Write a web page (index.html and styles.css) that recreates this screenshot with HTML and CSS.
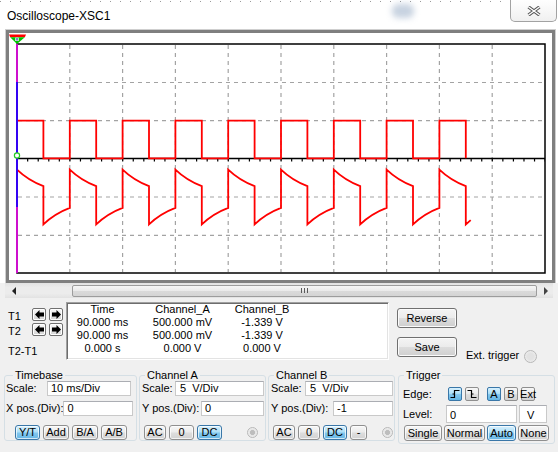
FILE: index.html
```html
<!DOCTYPE html>
<html>
<head>
<meta charset="utf-8">
<title>Oscilloscope-XSC1</title>
<link rel="stylesheet" href="styles.css">
</head>
<body>
<div class="window">
  <div class="titlebar">
    <span class="title">Oscilloscope-XSC1</span>
    <span class="glass"></span>
    <div class="close">
      <svg width="14" height="10" viewBox="0 0 14 10"><path class="xo" d="M1.5 1 L12.5 9 M12.5 1 L1.5 9"/><path class="xi" d="M1.5 1 L12.5 9 M12.5 1 L1.5 9"/></svg>
    </div>
  </div>

  <div class="frame">
    <svg class="plot" width="543" height="247" viewBox="9 33 543 247">
      <path class="grid" d="M69.8 45V272M122.6 45V272M175.4 45V272M228.2 45V272M281 45V272M333.8 45V272M386.6 45V272M439.4 45V272M492.2 45V272"/>
      <path class="grid" d="M18 82.5H544M18 120.7H544M18 197H544M18 235.3H544"/>
      <line class="axis" x1="17" y1="158.5" x2="545" y2="158.5"/>
      <line class="ticks" x1="16.5" y1="160" x2="545" y2="160"/>
      <rect class="border" x="17" y="44" width="528" height="229"/>
      <path class="trace" d="M17 120.7h26.4v37.6h26.4v-37.6h26.4v37.6h26.4v-37.6h26.4v37.6h26.4v-37.6h26.4v37.6h26.4v-37.6h26.4v37.6h26.4v-37.6h26.4v37.6h26.4v-37.6h26.4v37.6h26.4v-37.6h26.4v37.6h26.4v-37.6h26.4v37.6"/>
      <path class="trace" d="M17 169.6c8.8 8.46 17.6 13.18 26.4 16.53v38.27c8.8-8.46 17.6-13.18 26.4-16.53v-38.27c8.8 8.46 17.6 13.18 26.4 16.53v38.27c8.8-8.46 17.6-13.18 26.4-16.53v-38.27c8.8 8.46 17.6 13.18 26.4 16.53v38.27c8.8-8.46 17.6-13.18 26.4-16.53v-38.27c8.8 8.46 17.6 13.18 26.4 16.53v38.27c8.8-8.46 17.6-13.18 26.4-16.53v-38.27c8.8 8.46 17.6 13.18 26.4 16.53v38.27c8.8-8.46 17.6-13.18 26.4-16.53v-38.27c8.8 8.46 17.6 13.18 26.4 16.53v38.27c8.8-8.46 17.6-13.18 26.4-16.53v-38.27c8.8 8.46 17.6 13.18 26.4 16.53v38.27c8.8-8.46 17.6-13.18 26.4-16.53v-38.27c8.8 8.46 17.6 13.18 26.4 16.53v38.27c8.8-8.46 17.6-13.18 26.4-16.53v-38.27c8.8 8.46 17.6 13.18 26.4 16.53v38.27l4.9-4.3"/>
      <line class="cur1" x1="17" y1="44" x2="17" y2="273"/>
      <line class="cur2" x1="17" y1="82" x2="17" y2="207"/>
      <circle class="gnd" cx="17" cy="155.5" r="2.6"/>
      <polygon class="mk-red" points="9,34.5 26,34.5 24.8,37.2 10.2,37.2"/>
      <polygon class="mk-green" points="10.2,37.2 24.8,37.2 17,44"/>
      <rect class="mk-label" x="15.3" y="37.6" width="3.4" height="3.4"/>
      <line class="mk-one" x1="17" y1="38" x2="17" y2="40.6"/>
    </svg>
  </div>

  <div class="lower">
    <div class="hscroll">
      <span class="scell"><span class="tri-l"></span></span>
      <div class="strack"><div class="thumb"><span class="grip"></span></div></div>
      <span class="scell right"><span class="tri-r"></span></span>
    </div>

    <div class="cursors">
      <div class="tcol">
        <div class="trow">
          <span class="tlab">T1</span>
          <button class="arr"><svg width="9" height="9" viewBox="0 0 9 9"><polygon points="0,4.5 4.5,0 4.5,2.6 9,2.6 9,6.4 4.5,6.4 4.5,9"/></svg></button>
          <button class="arr"><svg width="9" height="9" viewBox="0 0 9 9"><polygon points="9,4.5 4.5,0 4.5,2.6 0,2.6 0,6.4 4.5,6.4 4.5,9"/></svg></button>
        </div>
        <div class="trow">
          <span class="tlab">T2</span>
          <button class="arr"><svg width="9" height="9" viewBox="0 0 9 9"><polygon points="0,4.5 4.5,0 4.5,2.6 9,2.6 9,6.4 4.5,6.4 4.5,9"/></svg></button>
          <button class="arr"><svg width="9" height="9" viewBox="0 0 9 9"><polygon points="9,4.5 4.5,0 4.5,2.6 0,2.6 0,6.4 4.5,6.4 4.5,9"/></svg></button>
        </div>
        <div class="tdiff">T2-T1</div>
      </div>

      <div class="readout">
        <span>Time</span><span>Channel_A</span><span>Channel_B</span>
        <span>90.000 ms</span><span>500.000 mV</span><span>-1.339 V</span>
        <span>90.000 ms</span><span>500.000 mV</span><span>-1.339 V</span>
        <span>0.000 s</span><span>0.000 V</span><span>0.000 V</span>
      </div>

      <div class="actions">
        <button class="pbtn">Reverse</button>
        <button class="pbtn">Save</button>
      </div>

      <div class="ext"><span>Ext. trigger</span><span class="radio big"></span></div>
    </div>

    <div class="groups">
      <fieldset class="grp g-time">
        <legend>Timebase</legend>
        <div class="row"><span class="lbl">Scale:</span><span class="tb w84">10 ms/Div</span></div>
        <div class="row"><span class="lbl">X pos.(Div):</span><span class="tb w70">0</span></div>
        <div class="brow b-time">
          <button class="btn on w25">Y/T</button>
          <button class="btn w26">Add</button>
          <button class="btn w26">B/A</button>
          <button class="btn w26">A/B</button>
        </div>
      </fieldset>

      <fieldset class="grp g-cha">
        <legend>Channel A</legend>
        <div class="row"><span class="lbl">Scale:</span><span class="tb w89 pad4">5  V/Div</span></div>
        <div class="row"><span class="lbl">Y pos.(Div):</span><span class="tb w63">0</span></div>
        <div class="brow">
          <button class="btn w22">AC</button>
          <button class="btn w25">0</button>
          <button class="btn on w25">DC</button>
          <span class="radio ra"></span>
        </div>
      </fieldset>

      <fieldset class="grp g-chb">
        <legend>Channel B</legend>
        <div class="row"><span class="lbl">Scale:</span><span class="tb w88 pad4">5  V/Div</span></div>
        <div class="row"><span class="lbl">Y pos.(Div):</span><span class="tb w60">-1</span></div>
        <div class="brow">
          <button class="btn w22">AC</button>
          <button class="btn w22">0</button>
          <button class="btn on w24">DC</button>
          <button class="btn w17">-</button>
          <span class="radio rb"></span>
        </div>
      </fieldset>

      <fieldset class="grp g-trig">
        <legend>Trigger</legend>
        <div class="edge-row">
          <span class="tlbl w48">Edge:</span>
          <button class="ebtn on"><svg width="10" height="10" viewBox="0 0 10 10"><path d="M0.5 8.5H4.5V1.5H9.5M2.5 5H4.5"/></svg></button>
          <button class="ebtn"><svg width="10" height="10" viewBox="0 0 10 10"><path d="M0.5 1.5H4.5V8.5H9.5M4.5 5H6.5"/></svg></button>
          <button class="ebtn on w17 gapl">A</button>
          <button class="ebtn w16">B</button>
          <button class="ebtn w21">Ext</button>
        </div>
        <div class="level-row">
          <span class="tlbl w46">Level:</span>
          <span class="tb tall w71">0</span>
          <span class="tb tall w28 unit">V</span>
        </div>
        <div class="mode-row">
          <button class="btn tall16 w38">Single</button>
          <button class="btn tall16 w41">Normal</button>
          <button class="btn tall16 on w29">Auto</button>
          <button class="btn tall16 w31">None</button>
        </div>
      </fieldset>
    </div>
  </div>
</div>
</body>
</html>
```

FILE: styles.css
```css
* { box-sizing: border-box; }
html, body { margin: 0; padding: 0; }
body {
  width: 558px;
  height: 452px;
  overflow: hidden;
  background: #fff;
  font-family: "Liberation Sans", Arial, sans-serif;
  font-size: 11px;
  color: #000;
}
.window {
  position: relative;
  width: 558px;
  height: 452px;
  display: flex;
  flex-direction: column;
  background: #fff;
}
.window::before {
  content: "";
  position: absolute;
  left: 0; right: 0; top: 1px;
  height: 1px;
  background: repeating-linear-gradient(90deg, #9a9a9a 0 1px, transparent 1px 10px);
}

/* title bar */
.titlebar {
  position: relative;
  flex: none;
  height: 30px;
  padding: 9px 0 0 7px;
  font-size: 12px;
  line-height: 15px;
  color: #000;
}
.glass {
  position: absolute;
  left: 392px; top: 4px;
  width: 22px; height: 14px;
  border-radius: 6px;
  background: rgba(95, 125, 165, 0.35);
  filter: blur(3px);
}
.close {
  position: absolute;
  right: 1px; top: -1px;
  width: 47px; height: 23px;
  border: 1px solid #a2a2a2;
  border-top: none;
  border-radius: 0 0 5px 5px;
  background: linear-gradient(#ffffff, #f0f0f0);
  display: flex;
  align-items: center;
  justify-content: center;
}
.close svg { display: block; margin-top: 1px; }
.xo { stroke: #555; stroke-width: 3.4; fill: none; }
.xi { stroke: #fff; stroke-width: 1.4; fill: none; }

/* scope frame */
.frame {
  flex: none;
  margin-left: 6px;
  width: 549px;
  height: 253px;
  border: 3px solid #7f7f7f;
  box-shadow: 0 0 0 1px #cfcfcf;
  background: #fff;
}
.plot { display: block; }
.grid { stroke: #a3a3a3; stroke-width: 1.2; stroke-dasharray: 4 4; fill: none; }
.axis { stroke: #000; stroke-width: 1.3; }
.ticks { stroke: #000; stroke-width: 3; stroke-dasharray: 1.2 9.36; }
.border { fill: none; stroke: #000; stroke-width: 1.5; }
.trace { fill: none; stroke: #ff0000; stroke-width: 1.8; }
.cur1 { stroke: #ff00ff; stroke-width: 1.5; }
.cur2 { stroke: #0000ff; stroke-width: 1.5; }
.gnd { fill: #fff; stroke: #22cc22; stroke-width: 1.2; }
.mk-red { fill: #ff0000; }
.mk-green { fill: #00c400; }
.mk-label { fill: #fff; }
.mk-one { stroke: #0000aa; stroke-width: 1; }

/* lower panel */
.lower {
  flex: 1;
  background: #f0f0f0;
}
.hscroll {
  margin-left: 5px;
  width: 548px;
  height: 15px;
  display: flex;
  align-items: center;
  background: linear-gradient(#e2e2e2, #ececec 30%, #ececec 70%, #e2e2e2);
}
.scell {
  flex: none;
  width: 17px;
  height: 15px;
  display: flex;
  align-items: center;
  justify-content: center;
}
.scell.right { width: 15px; justify-content: flex-end; padding-right: 5px; }
.tri-l {
  width: 0; height: 0;
  border-top: 4px solid transparent;
  border-bottom: 4px solid transparent;
  border-right: 4px solid #222;
}
.tri-r {
  width: 0; height: 0;
  border-top: 4px solid transparent;
  border-bottom: 4px solid transparent;
  border-left: 4px solid #444;
}
.strack { flex: 1; height: 15px; display: flex; align-items: center; }
.thumb {
  margin-left: 50px;
  width: 465px;
  height: 12px;
  border: 1px solid #9c9c9c;
  border-radius: 2px;
  background: linear-gradient(#f6f6f6, #e9e9e9 50%, #dadada 50%, #d4d4d4);
  display: flex;
  align-items: center;
  justify-content: center;
}
.grip {
  width: 7px;
  height: 5px;
  background: repeating-linear-gradient(90deg, #5a5a5a 0 1px, transparent 1px 3px);
}

/* cursor readout section */
.cursors {
  display: flex;
  height: 58px;
  margin-top: 4px;
}
.tcol { flex: none; width: 66px; padding: 6px 0 0 8px; }
.trow { display: flex; align-items: center; height: 13px; gap: 3px; }
.trow + .trow { margin-top: 2px; }
.tlab { width: 21px; padding-top: 3px; line-height: 13px; }
.arr {
  width: 14px; height: 13px;
  padding: 0;
  border: 1px solid #707070;
  border-radius: 2px;
  background: linear-gradient(#fafafa, #e6e6e6 50%, #d4d4d4);
  box-shadow: inset 0 0 0 1px #fff;
  display: flex;
  align-items: center;
  justify-content: center;
}
.arr svg { display: block; fill: #000; }
.tdiff { margin-top: 9px; line-height: 13px; }

.readout {
  flex: none;
  width: 323px;
  height: 58px;
  background: #fff;
  border: 1px solid;
  border-color: #a0a0a0 #ffffff #ffffff #a0a0a0;
  box-shadow: inset 1px 1px 0 #6d6d6d, inset -1px -1px 0 #e3e3e3;
  padding-left: 1px;
  display: grid;
  grid-template-columns: 69px 91px 68px;
  grid-auto-rows: 13px;
  align-content: start;
  line-height: 13px;
  text-align: center;
  white-space: nowrap;
}

.actions {
  flex: none;
  margin-left: 8px;
  padding-top: 6px;
  display: flex;
  flex-direction: column;
  gap: 9px;
}
.pbtn {
  width: 60px;
  height: 20px;
  padding: 0;
  font: inherit;
  color: #000;
  border: 1px solid #707070;
  border-radius: 3px;
  background: linear-gradient(#f4f4f4, #ebebeb 50%, #dddddd 50%, #cfcfcf);
  box-shadow: inset 0 0 0 1px #fbfbfb;
}
.ext {
  flex: none;
  margin-left: 9px;
  padding-top: 48px;
  display: flex;
  align-items: center;
  gap: 5px;
  line-height: 13px;
}
.radio {
  display: inline-block;
  flex: none;
  width: 11px; height: 11px;
  border-radius: 50%;
  border: 1px solid #b8b8b8;
  background: radial-gradient(circle, #bdbdbd 0 2.2px, #e4e4e4 2.8px, #f7f7f7 100%);
}
.radio.big {
  width: 13px; height: 13px;
  margin-top: 2px;
  background: radial-gradient(circle, #e2e2e2 0 3px, #f4f4f4 100%);
}

/* group boxes */
.groups {
  display: flex;
  margin-top: 9px;
  padding-left: 4px;
}
.grp {
  flex: none;
  margin: 0;
  padding: 0 0 0 1px;
  height: 72px;
  min-width: 0;
  border: 1px solid #d5dfe5;
  border-radius: 3px;
}
.grp legend {
  padding: 0 2px;
  margin-left: 4px;
  line-height: 12px;
  font-size: 11px;
}
.g-time { width: 133px; margin-right: 2px; }
.g-time legend { margin-left: 7px; }
.g-cha { width: 127px; margin-right: 2px; }
.g-chb { width: 127px; margin-right: 3px; }
.g-trig { width: 157px; height: 75px; }

.row {
  display: flex;
  align-items: center;
  justify-content: space-between;
  height: 15px;
  padding-right: 1px;
}
.g-time .row { padding-right: 5px; }
.row + .row { margin-top: 5px; }
.lbl { padding-left: 0; line-height: 13px; white-space: nowrap; }
.g-cha .lbl, .g-chb .lbl { padding-left: 1px; }

.tb {
  flex: none;
  height: 15px;
  background: #fff;
  border: 1px solid #c9c9c9;
  border-top-color: #abadb3;
  padding-left: 3px;
  line-height: 13px;
  white-space: pre;
}
.tb.pad4 { padding-left: 4px; }
.tb.tall { height: 18px; line-height: 16px; padding-top: 1px; }
.tb.unit { margin-left: 2px; padding-left: 7px; }

.brow {
  display: flex;
  align-items: center;
  gap: 3px;
  height: 15px;
  margin-top: 9px;
  margin-left: 3px;
}
.brow.b-time { margin-left: 9px; }
.btn {
  flex: none;
  height: 15px;
  padding: 0;
  font: inherit;
  line-height: 13px;
  color: #000;
  text-align: center;
  border: 1px solid #8f8f8f;
  border-radius: 3px;
  background: linear-gradient(#f7f7f7, #ececec 45%, #dddddd 55%, #d2d2d2);
  box-shadow: inset 0 0 0 1px rgba(255, 255, 255, 0.7);
}
.btn.on, .ebtn.on {
  background: linear-gradient(#d8f0fd, #ade0f8 45%, #82c7ef 55%, #66b6e4);
  border-color: #3a77a8;
}
.btn.tall16 { height: 16px; line-height: 14px; }
.radio.ra { margin-left: auto; margin-right: 7px; }
.radio.rb { margin-left: auto; margin-right: 1px; }

.w16 { width: 16px; }
.w17 { width: 17px; }
.w21 { width: 21px; }
.w22 { width: 22px; }
.w24 { width: 24px; }
.w25 { width: 25px; }
.w26 { width: 26px; }
.w28 { width: 28px; }
.w29 { width: 29px; }
.w31 { width: 31px; }
.w38 { width: 38px; }
.w41 { width: 41px; }
.w46 { width: 46px; }
.w48 { width: 48px; }
.w60 { width: 60px; }
.w63 { width: 63px; }
.w70 { width: 70px; }
.w71 { width: 71px; }
.w84 { width: 84px; }
.w88 { width: 88px; }
.w89 { width: 89px; }

/* trigger */
.edge-row {
  display: flex;
  align-items: center;
  gap: 3px;
  height: 14px;
  margin-top: 6px;
}
.tlbl { flex: none; padding-left: 3px; line-height: 13px; }
.edge-row .tlbl { margin-right: -3px; }
.ebtn {
  flex: none;
  width: 14px;
  height: 14px;
  padding: 0;
  font: inherit;
  line-height: 12px;
  color: #000;
  text-align: center;
  border: 1px solid #8f8f8f;
  border-radius: 2px;
  background: linear-gradient(#f7f7f7, #ececec 45%, #dddddd 55%, #d2d2d2);
  display: flex;
  align-items: center;
  justify-content: center;
}
.ebtn svg { display: block; }
.ebtn path { fill: none; stroke: #000; stroke-width: 1.2; }
.ebtn.gapl { margin-left: 5px; }
.level-row {
  display: flex;
  align-items: center;
  height: 18px;
  margin-top: 4px;
}
.mode-row {
  display: flex;
  gap: 2px;
  height: 16px;
  margin-top: 2px;
  margin-left: 4px;
}
```
